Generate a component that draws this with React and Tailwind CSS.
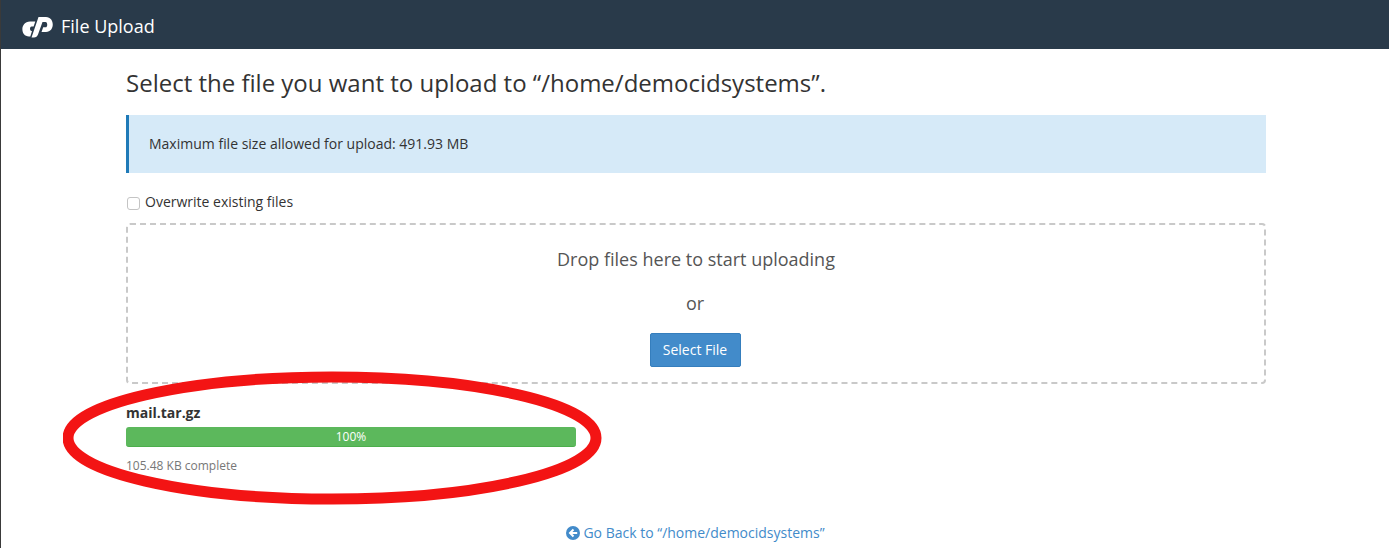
export default function App() {
  return (
    <div className="relative h-[548px] overflow-hidden bg-white border-l border-[#3a3a3a] text-[#333] text-[14px] font-['Open_Sans',sans-serif]">
      <header className="h-[49px] bg-[#293a4a] flex items-center pl-[21px] gap-[8px] text-white">
        <svg width="31" height="22" viewBox="0 0 31 22" fill="#fff" className="mt-[5px]">
          <path d="M8 5.5H13.3L11.6 10.5H9.5C7.5 10.5 7.5 15 9.5 15H10L8.3 20.5H7C-2 20.5-2 5.5 8 5.5z" />
          <path d="M16.5 1H24C33 1 33 16 24 16H19.5L21.2 11.3H23.5C25.8 11.3 25.8 6 23.5 6H20.5L16 18.5C15.2 20.5 14 21.5 12 21.5H9.5z" />
        </svg>
        <span className="text-[18px] leading-[26px] mt-[2px]">File Upload</span>
      </header>
      <main className="w-[1140px] ml-[125px]">
        <h1 className="text-[24px] leading-[26px] mt-[21px]">Select the file you want to upload to “/home/democidsystems”.</h1>
        <div className="mt-[19px] h-[58px] flex items-center bg-[#d6eaf8] border-l-[3px] border-[#1f7ab8] pl-[20px] pb-[2px]">
          Maximum file size allowed for upload: 491.93 MB
        </div>
        <label className="flex items-center h-[20px] mt-[18px]">
          <input type="checkbox" className="appearance-none w-[13px] h-[13px] ml-[1px] mt-[4px] mr-[5px] rounded-[3px] border border-[#c4c4c4] bg-white" />
          Overwrite existing files
        </label>
        <section className="mt-[12px] h-[161px] border-2 border-dashed border-[#c9c9c9] rounded-[4px] flex flex-col items-center">
          <p className="text-[18px] leading-[24px] mt-[22px] text-[#555]">Drop files here to start uploading</p>
          <p className="text-[18px] leading-[24px] mt-[20px] mr-[2px] text-[#555]">or</p>
          <button className="mt-[18px] mr-[2px] h-[34px] w-[91px] pb-[2px] bg-[#428bca] border border-[#357ebd] rounded-[2px] text-white">Select File</button>
        </section>
        <div className="mt-[19px] font-bold leading-[20px]">mail.tar.gz</div>
        <div className="mt-[4px] w-[450px] h-[20px] bg-[#5cb85c] border-b border-[#4cae4c] rounded-[3px] flex items-center justify-center text-white text-[12px]">100%</div>
        <div className="mt-[10px] text-[12px] leading-[18px] text-[#777]">105.48 KB complete</div>
        <a className="mt-[48px] flex items-center justify-center gap-[3px] text-[#428bca] leading-[20px] pr-[1px]">
          <svg width="14" height="14" viewBox="0 0 14 14">
            <circle cx="7" cy="7" r="7" fill="#428bca" />
            <path d="M6.8 2.8 L2.6 7 L6.8 11.2 L8.2 9.8 L6.4 8.1 H11.2 V5.9 H6.4 L8.2 4.2z" fill="#fff" />
          </svg>
          Go Back to “/home/democidsystems”
        </a>
      </main>
      <svg className="absolute left-[62px] top-[371px] pointer-events-none" width="540" height="134" viewBox="0 0 540 134">
        <ellipse cx="269" cy="67" rx="264" ry="61" fill="none" stroke="#f31414" strokeWidth="11" />
      </svg>
    </div>
  );
}
